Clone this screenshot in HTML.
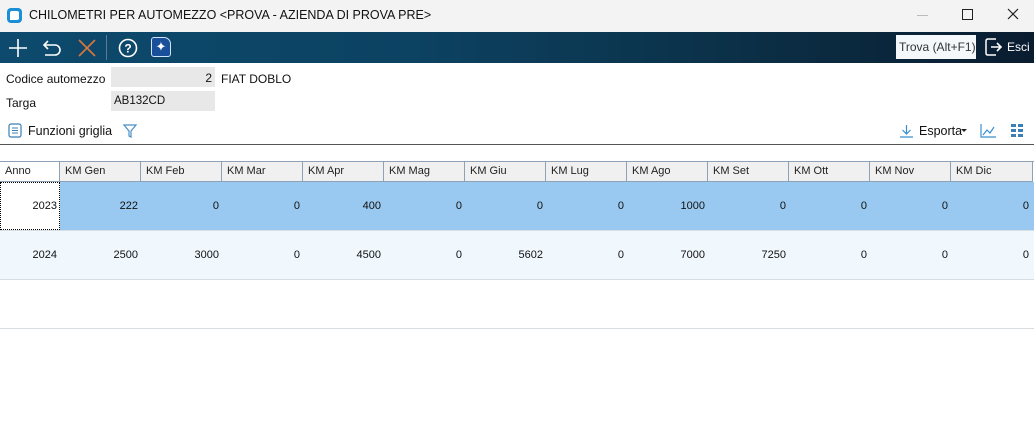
<!DOCTYPE html>
<html><head><meta charset="utf-8"><style>
*{box-sizing:border-box;margin:0;padding:0}
body{width:1034px;height:426px;background:#fff;font-family:"Liberation Sans","DejaVu Sans",sans-serif;font-size:12px;color:#111;position:relative;overflow:hidden}
.abs{position:absolute}
.title{top:0;left:0;width:1034px;height:32px;background:#f3f3f3}
.tb{top:32px;left:0;width:1034px;height:31px;background:linear-gradient(90deg,#0d4a6d 0%,#0c4262 40%,#0b3148 70%,#0a1c30 100%)}
.hdr{top:162px;height:20px;background:#f0f0f0;border-right:1px solid #8ea2b5;border-bottom:1px solid #8ea2b5;padding:3px 0 0 5px;font-size:11px;color:#222}
.cell{height:48px;text-align:right;padding-right:3px;line-height:48px;font-size:11px}
</style></head><body>
<div class="abs title">
 <div class="abs" style="left:7px;top:8px;width:15px;height:15px;background:#1a8fd6;border-radius:4px"><div style="position:absolute;left:3px;top:3px;width:9px;height:9px;background:#fff;border-radius:2px 2px 2px 0"></div></div>
 <div class="abs" style="left:29px;top:8px;font-size:12.5px;color:#111">CHILOMETRI PER AUTOMEZZO &lt;PROVA - AZIENDA DI PROVA PRE&gt;</div>
 <div class="abs" style="left:917px;top:15px;width:11px;height:1px;background:#bbb"></div>
 <div class="abs" style="left:962px;top:9px;width:11px;height:11px;border:1.3px solid #222"></div>
 <svg class="abs" style="left:1007px;top:8px" width="12" height="12"><path d="M1 1L11 11M11 1L1 11" stroke="#222" stroke-width="1.2"/></svg>
</div>
<div class="abs tb">
 <svg class="abs" style="left:8px;top:6px" width="20" height="20"><path d="M10 1V19M1 10H19" stroke="#fff" stroke-width="1.6"/></svg>
 <svg class="abs" style="left:41px;top:6px" width="22" height="20"><path d="M7 3L3 7L7 11M3 7H14A5 5 0 0 1 14 17H4" stroke="#fff" stroke-width="1.6" fill="none"/></svg>
 <svg class="abs" style="left:77px;top:6px" width="20" height="20"><path d="M2 2L18 18M18 2L2 18" stroke="#d8773a" stroke-width="1.6"/></svg>
 <div class="abs" style="left:106px;top:3px;width:1px;height:25px;background:#5a7d95"></div>
 <svg class="abs" style="left:117px;top:5px" width="22" height="22"><circle cx="11" cy="11" r="8.5" fill="none" stroke="#fff" stroke-width="1.6"/><text x="11" y="15.5" font-size="12" font-family="Liberation Sans" fill="#fff" text-anchor="middle" font-weight="bold">?</text></svg>
 <div class="abs" style="left:151px;top:5px;width:20px;height:20px;background:#1a4f9a;border:1.5px solid #cfe3ff;border-radius:3px 7px 3px 3px;color:#fff;font-size:13px;line-height:17px;text-align:center">✦</div>
 <div class="abs" style="left:896px;top:3px;width:80px;height:24px;background:#f4f8fb;color:#333;font-size:12px;line-height:24px;padding-left:3px">Trova (Alt+F1)</div>
 <svg class="abs" style="left:984px;top:5px" width="20" height="20"><path d="M7 10H17M13 6L17 10L13 14" stroke="#fff" stroke-width="1.6" fill="none"/><path d="M12 2H4Q2 2 2 4V16Q2 18 4 18H12" fill="none" stroke="#fff" stroke-width="1.5"/></svg>
 <div class="abs" style="left:1007px;top:8px;color:#fff;font-size:12px">Esci</div>
</div>
<div class="abs" style="left:6px;top:72px">Codice automezzo</div>
<div class="abs" style="left:111px;top:67px;width:104px;height:20px;background:#e8e8e8;text-align:right;padding:4px 3px 0 0">2</div>
<div class="abs" style="left:221px;top:72px">FIAT DOBLO</div>
<div class="abs" style="left:6px;top:96px">Targa</div>
<div class="abs" style="left:111px;top:91px;width:104px;height:20px;background:#e8e8e8;padding:4px 0 0 3px;font-size:11.5px">AB132CD</div>
<svg class="abs" style="left:8px;top:123px" width="14" height="15"><rect x="1" y="1" width="12" height="13" rx="2" fill="none" stroke="#3a7fb5" stroke-width="1.2"/><path d="M4 5H10M4 7.5H10M4 10H10" stroke="#3a7fb5"/></svg>
<div class="abs" style="left:28px;top:124px;font-size:12.5px">Funzioni griglia</div>
<svg class="abs" style="left:123px;top:124px" width="14" height="14"><path d="M1 1H13L8 7V13L6 12V7Z" fill="none" stroke="#4a8fc4" stroke-width="1.2"/></svg>
<svg class="abs" style="left:899px;top:124px" width="15" height="14"><path d="M7.5 1V10M3.5 6L7.5 10L11.5 6M1 13H14" stroke="#3a8fd0" stroke-width="1.2" fill="none"/></svg>
<div class="abs" style="left:919px;top:124px;font-size:12.5px">Esporta</div>
<div class="abs" style="left:961px;top:129px;width:0;height:0;border-left:3px solid transparent;border-right:3px solid transparent;border-top:3px solid #222"></div>
<svg class="abs" style="left:980px;top:123px" width="17" height="15"><path d="M1 1V14H16M3 12L7 7L10 10L14 4" stroke="#3a8fd0" stroke-width="1.2" fill="none"/></svg>
<svg class="abs" style="left:1011px;top:124px" width="12" height="13"><g fill="#3a7fb5"><rect x="0" y="0" width="5" height="3"/><rect x="7" y="0" width="5" height="3"/><rect x="0" y="5" width="5" height="3"/><rect x="7" y="5" width="5" height="3"/><rect x="0" y="10" width="5" height="3"/><rect x="7" y="10" width="5" height="3"/></g></svg>
<div class="abs" style="left:0;top:144px;width:1034px;height:1px;background:#555"></div>
<div class="abs" style="left:0;top:161px;width:1034px;height:1px;background:#8ea2b5"></div>
<div class="abs hdr" style="left:0;width:60px;background:#fff">Anno</div>
<div class="abs hdr" style="left:60px;width:81px">KM Gen</div>
<div class="abs hdr" style="left:141px;width:81px">KM Feb</div>
<div class="abs hdr" style="left:222px;width:81px">KM Mar</div>
<div class="abs hdr" style="left:303px;width:81px">KM Apr</div>
<div class="abs hdr" style="left:384px;width:81px">KM Mag</div>
<div class="abs hdr" style="left:465px;width:81px">KM Giu</div>
<div class="abs hdr" style="left:546px;width:81px">KM Lug</div>
<div class="abs hdr" style="left:627px;width:81px">KM Ago</div>
<div class="abs hdr" style="left:708px;width:81px">KM Set</div>
<div class="abs hdr" style="left:789px;width:81px">KM Ott</div>
<div class="abs hdr" style="left:870px;width:81px">KM Nov</div>
<div class="abs hdr" style="left:951px;width:82px">KM Dic</div>
<div class="abs" style="left:0;top:182px;width:1034px;height:48px;background:#99c9f0"></div>
<div class="abs" style="left:0;top:182px;width:60px;height:48px;background:#fff;border:1px dotted #000"></div>
<div class="abs" style="left:0;top:230px;width:1034px;height:1px;background:#d8dde2"></div>
<div class="abs" style="left:0;top:231px;width:1034px;height:48px;background:#f0f8fe"></div>
<div class="abs" style="left:0;top:279px;width:1034px;height:1px;background:#d8dde2"></div>
<div class="abs" style="left:0;top:328px;width:1034px;height:1px;background:#d8dde2"></div>
<div class="abs" style="top:182px;left:0;display:flex">
<div class="cell" style="width:60px">2023</div><div class="cell" style="width:81px">222</div><div class="cell" style="width:81px">0</div><div class="cell" style="width:81px">0</div><div class="cell" style="width:81px">400</div><div class="cell" style="width:81px">0</div><div class="cell" style="width:81px">0</div><div class="cell" style="width:81px">0</div><div class="cell" style="width:81px">1000</div><div class="cell" style="width:81px">0</div><div class="cell" style="width:81px">0</div><div class="cell" style="width:81px">0</div><div class="cell" style="width:81px">0</div></div>
<div class="abs" style="top:231px;left:0;display:flex">
<div class="cell" style="width:60px">2024</div><div class="cell" style="width:81px">2500</div><div class="cell" style="width:81px">3000</div><div class="cell" style="width:81px">0</div><div class="cell" style="width:81px">4500</div><div class="cell" style="width:81px">0</div><div class="cell" style="width:81px">5602</div><div class="cell" style="width:81px">0</div><div class="cell" style="width:81px">7000</div><div class="cell" style="width:81px">7250</div><div class="cell" style="width:81px">0</div><div class="cell" style="width:81px">0</div><div class="cell" style="width:81px">0</div></div>
</body></html>
